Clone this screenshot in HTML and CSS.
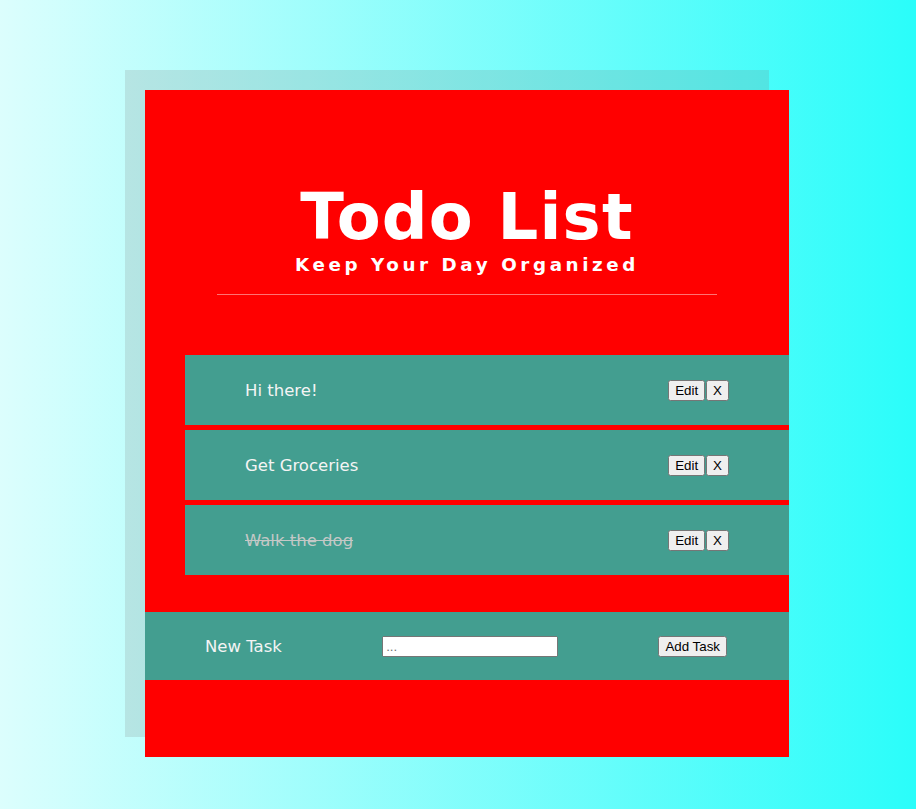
FILE: index.html
```html
<!DOCTYPE html>
<html lang="en">
<head>
<meta charset="utf-8">
<title>Todo List</title>
<link rel="stylesheet" href="styles.css">
</head>
<body>
<main class="card">
  <header class="header">
    <h1 class="title">Todo List</h1>
    <p class="subtitle">Keep Your Day Organized</p>
    <div class="rule"></div>
  </header>
  <ul class="tasks">
    <li class="task"><span class="task-text">Hi there!</span><span class="actions"><button class="btn">Edit</button><button class="btn">X</button></span></li>
    <li class="task"><span class="task-text">Get Groceries</span><span class="actions"><button class="btn">Edit</button><button class="btn">X</button></span></li>
    <li class="task"><span class="task-text done">Walk the dog</span><span class="actions"><button class="btn">Edit</button><button class="btn">X</button></span></li>
  </ul>
  <form class="new-task">
    <label class="new-label" for="task">New Task</label>
    <input id="task" class="new-input" type="text" placeholder="...">
    <button class="btn" type="button">Add Task</button>
  </form>
</main>
</body>
</html>
```
FILE: styles.css
```css
html, body {
  margin: 0;
  height: 100%;
}
body {
  background: linear-gradient(to right, #dcfefd, #2afdfa);
  padding-top: 90px;
  box-sizing: border-box;
  font-family: "DejaVu Sans", Verdana, sans-serif;
}
.card {
  width: 644px;
  height: 667px;
  margin-left: 145px;
  background: #ff0000;
  box-shadow: -20px -20px 0 rgba(128, 128, 128, 0.2);
  display: flex;
  flex-direction: column;
}
.header {
  padding-top: 90px;
  text-align: center;
  color: #fff;
}
.title {
  margin: 0;
  font-size: 64px;
  font-weight: bold;
  letter-spacing: 1.2px;
  line-height: normal;
}
.subtitle {
  margin: 0;
  font-size: 18.3px;
  font-weight: bold;
  letter-spacing: 3.6px;
  line-height: normal;
}
.rule {
  width: 500px;
  height: 1px;
  margin: 19px auto 0;
  background: rgba(255, 255, 255, 0.45);
}
.tasks {
  list-style: none;
  margin: 60px 0 0 40px;
  padding: 0;
  display: flex;
  flex-direction: column;
  gap: 5px;
}
.task {
  height: 70px;
  background: #439e90;
  display: flex;
  align-items: center;
  justify-content: space-between;
  padding: 0 60px;
  color: #f4f4f4;
  font-size: 16.5px;
}
.done {
  text-decoration: line-through;
  color: #c4c8c6;
}
.actions {
  display: flex;
  gap: 1px;
}
.btn {
  padding: 1px 5px;
}
.new-task {
  margin: 37px 0 0;
  height: 68px;
  background: #439e90;
  display: flex;
  align-items: center;
  justify-content: space-between;
  padding: 0 62px 0 60px;
  color: #f4f4f4;
  font-size: 16.5px;
}
.new-input {
  width: 176px;
  height: 21px;
  box-sizing: border-box;
  margin: 0;
}
```
